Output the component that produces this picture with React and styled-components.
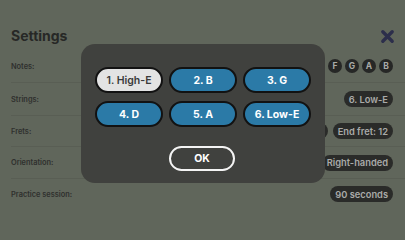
import React from "react";
import styled, { createGlobalStyle } from "styled-components";

const Global = createGlobalStyle`
  html, body { margin: 0; padding: 0; background: #60665b; }
  body { font-family: Inter, "Noto Sans", sans-serif; -webkit-font-smoothing: antialiased; }
`;

const Page = styled.div`
  position: relative;
  width: 405px;
  height: 228px;
  overflow: hidden;
  background: #60665b;
  box-sizing: border-box;
  padding: 24px 12px 0 11px;
  display: flex;
  flex-direction: column;
`;

const Header = styled.div`
  display: flex;
  align-items: center;
  justify-content: space-between;
  height: 22px;
  margin-bottom: 4px;
`;

const Title = styled.h1`
  margin: 0;
  font-size: 14px;
  font-weight: 700;
  color: #272826;
`;

const Close = styled.svg`
  width: 15px;
  height: 15px;
  margin-right: -2px;
  margin-top: 2px;
`;

const Row = styled.div`
  box-sizing: border-box;
  display: flex;
  align-items: center;
  justify-content: space-between;
  height: ${(p) => p.$h || 32}px;
  border-bottom: ${(p) => (p.$last ? "none" : "1px solid #595e54")};
  margin-right: -12px;
  padding-right: 12px;
`;

const Label = styled.span`
  font-size: 7.4px;
  font-weight: 600;
  color: #2f302e;
`;

const Group = styled.div`
  display: flex;
  align-items: center;
  gap: ${(p) => p.$gap || 4}px;
`;

const NoteDot = styled.span`
  width: 14px;
  height: 14px;
  border-radius: 50%;
  background: #262726;
  color: #a9aaa8;
  font-size: 8.5px;
  font-weight: 700;
  display: flex;
  align-items: center;
  justify-content: center;
`;

const Chip = styled.span`
  height: 16px;
  border-radius: 8px;
  background: #2a2b29;
  color: #a9aaa8;
  font-size: 9.3px;
  font-weight: 600;
  padding: 0 5px;
  display: flex;
  align-items: center;
  white-space: nowrap;
`;

const Overlay = styled.div`
  position: absolute;
  left: 81px;
  top: 44px;
  width: 244px;
  height: 139px;
  border-radius: 14px;
  background: #40413e;
  box-sizing: border-box;
  padding: 23px 14px 0 14px;
  display: flex;
  flex-direction: column;
  align-items: center;
`;

const Grid = styled.div`
  display: grid;
  grid-template-columns: repeat(3, 68px);
  column-gap: 6px;
  row-gap: 8px;
`;

const StringBtn = styled.button`
  height: 26px;
  box-sizing: border-box;
  border-radius: 13px;
  border: 2px solid #121212;
  background: ${(p) => (p.$active ? "#e3e3e3" : "#2b7aa7")};
  color: ${(p) => (p.$active ? "#3a3a3a" : "#ffffff")};
  font-family: Inter, "Noto Sans", sans-serif;
  font-size: 10.5px;
  font-weight: ${(p) => (p.$active ? 600 : 700)};
  padding: 0;
  display: flex;
  align-items: center;
  justify-content: center;
`;

const OkBtn = styled.button`
  margin-top: 19px;
  width: 66px;
  height: 25px;
  box-sizing: border-box;
  border-radius: 13px;
  border: 2.5px solid #f4f4f4;
  background: #40413e;
  color: #ffffff;
  font-family: Inter, "Noto Sans", sans-serif;
  font-size: 10.5px;
  font-weight: 700;
  padding: 0;
  margin-left: -2px;
`;

const strings = ["1. High-E", "2. B", "3. G", "4. D", "5. A", "6. Low-E"];
const notes = ["C", "D", "E", "F", "G", "A", "B"];

export default function App() {
  return (
    <>
      <Global />
      <Page>
        <Header>
          <Title>Settings</Title>
          <Close viewBox="0 0 16 16">
            <path d="M3 3 L13 13 M13 3 L3 13" stroke="#2c2e4b" strokeWidth="3.6" strokeLinecap="round" />
          </Close>
        </Header>
        <Row $h={33}>
          <Label>Notes:</Label>
          <Group $gap={3}>
            {notes.map((n) => (
              <NoteDot key={n}>{n}</NoteDot>
            ))}
          </Group>
        </Row>
        <Row $h={33}>
          <Label>Strings:</Label>
          <Chip>6. Low-E</Chip>
        </Row>
        <Row $h={31}>
          <Label>Frets:</Label>
          <Group $gap={5}>
            <Chip>Start fret: 0</Chip>
            <Chip>End fret: 12</Chip>
          </Group>
        </Row>
        <Row $h={32}>
          <Label>Orientation:</Label>
          <Chip>Right-handed</Chip>
        </Row>
        <Row $h={30} $last>
          <Label>Practice session:</Label>
          <Chip>90 seconds</Chip>
        </Row>
        <Overlay>
          <Grid>
            {strings.map((s, i) => (
              <StringBtn key={s} $active={i === 0}>
                {s}
              </StringBtn>
            ))}
          </Grid>
          <OkBtn>OK</OkBtn>
        </Overlay>
      </Page>
    </>
  );
}
